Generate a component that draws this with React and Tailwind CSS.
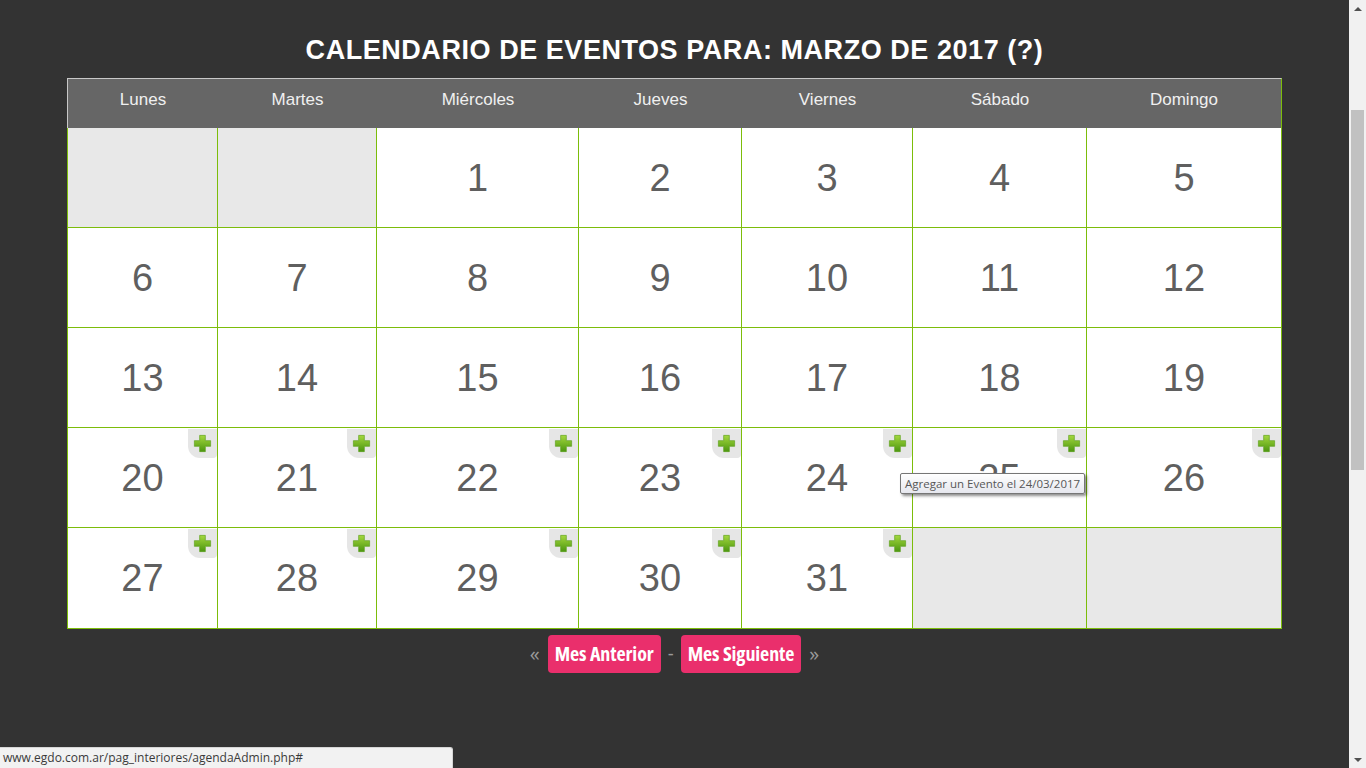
import React from "react";

const days = ["Lunes", "Martes", "Miércoles", "Jueves", "Viernes", "Sábado", "Domingo"];

const weeks = [
  [null, null, 1, 2, 3, 4, 5],
  [6, 7, 8, 9, 10, 11, 12],
  [13, 14, 15, 16, 17, 18, 19],
  [20, 21, 22, 23, 24, 25, 26],
  [27, 28, 29, 30, 31, null, null],
];

function PlusIcon() {
  return (
    <svg width="19" height="19" viewBox="0 0 18 18">
      <defs>
        <linearGradient id="pg" x1="0" y1="0" x2="0" y2="1">
          <stop offset="0" stopColor="#a4d83e" />
          <stop offset="1" stopColor="#4c9610" />
        </linearGradient>
      </defs>
      <path
        d="M6.3 1.3 h5.4 v5 h5 v5.4 h-5 v5 h-5.4 v-5 h-5 v-5.4 h5 z"
        fill="url(#pg)"
        stroke="#5a9e1a"
        strokeWidth="0.6"
        strokeLinejoin="round"
      />
    </svg>
  );
}

function Cell({ day, col, row }) {
  const border = `${col < 6 ? "border-r" : ""} ${row < 4 ? "border-b" : ""} border-[#7cbd0a]`;
  if (day === null) {
    return <div className={`h-[100px] bg-[#e8e8e8] ${border}`} />;
  }
  const hasPlus = day >= 20;
  return (
    <div className={`relative h-[100px] bg-white flex items-center justify-center ${border}`}>
      <span className="text-[38px] leading-none text-[#5f5f5f] font-['Liberation_Sans',Arial,sans-serif]">
        {day}
      </span>
      {hasPlus && (
        <div className="absolute top-[1px] right-0 w-[29px] h-[29px] bg-[#e6e6e6] rounded-bl-[12px] rounded-br-[4px] flex items-center justify-center pb-[1px]">
          <PlusIcon />
        </div>
      )}
    </div>
  );
}

export default function App() {
  const cols = "grid grid-cols-[150px_159px_202px_163px_171px_174px_194px]";
  return (
    <div className="w-[1366px] h-[768px] overflow-hidden flex bg-[#333333] font-['Liberation_Sans',Arial,sans-serif]">
      <div className="relative w-[1349px] h-full flex flex-col items-center pt-[35px]">
        <h1 className="text-[27px] leading-[30px] font-bold text-white tracking-[0.55px]">
          CALENDARIO DE EVENTOS PARA: MARZO DE 2017 (?)
        </h1>
        <div className="mt-[13px] w-[1215px]">
          <div className={`${cols} h-[50px] bg-[#666666] border-t border-l border-r border-[#c8c8c8] border-r-[#7cbd0a] items-start pt-[11px]`}>
            {days.map((d) => (
              <div key={d} className="text-center text-[17px] leading-[20px] text-[#f0f0f0]">
                {d}
              </div>
            ))}
          </div>
          <div className={`${cols} border border-t-0 border-[#7cbd0a]`}>
            {weeks.map((w, r) =>
              w.map((d, c) => <Cell key={`${r}-${c}`} day={d} row={r} col={c} />)
            )}
          </div>
        </div>
        <div className="mt-[6px] flex items-center gap-[6px]">
          <span className="text-[20px] text-[#9a9a9a] font-['Open_Sans',sans-serif] mr-[2px]">«</span>
          <button className="h-[38px] px-[7px] rounded-[4px] bg-[#ea2f6c] text-white text-[20px] font-bold font-['Open_Sans',sans-serif] [font-stretch:75%] tracking-[-0.1px]">
            Mes Anterior
          </button>
          <span className="text-[18px] text-[#9a9a9a] px-[1px]">-</span>
          <button className="h-[38px] px-[7px] rounded-[4px] bg-[#ea2f6c] text-white text-[20px] font-bold font-['Open_Sans',sans-serif] [font-stretch:75%] tracking-[-0.1px]">
            Mes Siguiente
          </button>
          <span className="text-[20px] text-[#9a9a9a] font-['Open_Sans',sans-serif] ml-[2px]">»</span>
        </div>

        <div className="absolute left-[900px] top-[473px] h-[21px] px-[4px] flex items-center bg-gradient-to-b from-white to-[#e6e7ee] border border-[#767676] rounded-[2px] shadow-[2px_2px_3px_rgba(0,0,0,0.45)] text-[11.5px] text-[#575757] font-['Open_Sans',sans-serif] whitespace-nowrap">
          Agregar un Evento el 24/03/2017
        </div>

        <div className="absolute left-0 bottom-0 w-[453px] h-[21px] bg-[#f2f2f2] border-t border-r border-[#d6d6d6] rounded-tr-[3px] flex items-center pl-[3px] text-[12px] text-[#3a3a3a] font-['Open_Sans',sans-serif]">
          www.egdo.com.ar/pag_interiores/agendaAdmin.php#
        </div>
      </div>
      <div className="w-[17px] h-full bg-[#f1f1f1] flex flex-col items-center">
        <div className="h-[17px] flex items-center justify-center">
          <div className="w-0 h-0 border-l-[4px] border-r-[4px] border-b-[4px] border-l-transparent border-r-transparent border-b-[#505050]" />
        </div>
        <div className="mt-[93px] w-[13px] h-[360px] bg-[#c1c1c1]" />
        <div className="flex-1" />
        <div className="h-[17px] flex items-center justify-center">
          <div className="w-0 h-0 border-l-[4px] border-r-[4px] border-t-[4px] border-l-transparent border-r-transparent border-t-[#505050]" />
        </div>
      </div>
    </div>
  );
}
